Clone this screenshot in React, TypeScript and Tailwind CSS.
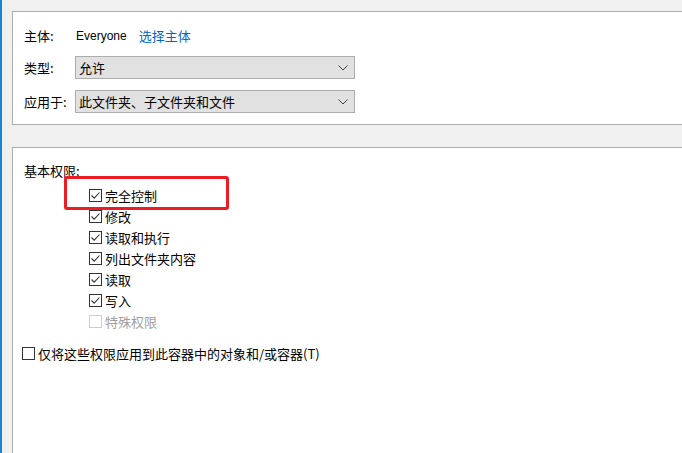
import React from 'react';

const cjk = { fontFamily: '"Noto Sans CJK SC", "Noto Sans", sans-serif' };

const perms = [
  { label: '完全控制', checked: true },
  { label: '修改', checked: true },
  { label: '读取和执行', checked: true },
  { label: '列出文件夹内容', checked: true },
  { label: '读取', checked: true },
  { label: '写入', checked: true },
  { label: '特殊权限', checked: false, disabled: true },
];

function Checkbox({ checked, disabled }: { checked?: boolean; disabled?: boolean }) {
  return (
    <span
      className={
        'flex h-[13px] w-[13px] shrink-0 items-center justify-center border bg-white ' +
        (disabled ? 'border-[#cccccc]' : 'border-[#333333]')
      }
    >
      {checked && (
        <svg width="11" height="11" viewBox="0 0 11 11">
          <path d="M1.5 5.5 L4.2 8.2 L9.5 2.5" fill="none" stroke="#333333" strokeWidth="1.1" />
        </svg>
      )}
    </span>
  );
}

function Select({ value }: { value: string }) {
  return (
    <div className="flex h-[23px] w-[280px] items-center justify-between border border-[#adadad] bg-[#e1e1e1] pl-[3px] pr-[6px]">
      <span className="text-[13px] text-black">{value}</span>
      <svg width="10" height="6" viewBox="0 0 10 6">
        <path d="M0.5 0.5 L5 5 L9.5 0.5" fill="none" stroke="#444444" strokeWidth="1" />
      </svg>
    </div>
  );
}

export default function App() {
  return (
    <div
      className="flex h-[453px] w-[682px] flex-col overflow-hidden border-l-2 border-[#1883d7] bg-[#f0f0f0] pl-[10px] pt-[11px]"
      style={cjk}
    >
      {/* owner / type / applies to */}
      <section className="flex h-[114px] shrink-0 flex-col border-y border-l border-[#adadad] bg-white pl-[11px] pt-[12px] text-[13px] text-black">
        <div className="flex h-[23px] items-center">
          <span className="w-[52px]">主体:</span>
          <span className="text-[12px]" style={{ fontFamily: '"Liberation Sans", Arial, sans-serif' }}>
            Everyone
          </span>
          <span className="ml-[12px] text-[#0066cc]">选择主体</span>
        </div>
        <div className="mt-[9px] flex items-center">
          <span className="w-[51px]">类型:</span>
          <Select value="允许" />
        </div>
        <div className="mt-[11px] flex items-center">
          <span className="w-[51px]">应用于:</span>
          <Select value="此文件夹、子文件夹和文件" />
        </div>
      </section>

      {/* permissions */}
      <section className="relative mt-[22px] flex flex-1 flex-col border-l border-t border-[#adadad] bg-white pt-[12px] text-[13px] text-black">
        <div className="flex h-[21px] items-center pl-[11px]">基本权限:</div>
        <div className="mt-[4px] flex flex-col pl-[76px]">
          {perms.map((p) => (
            <label key={p.label} className="flex h-[21px] items-center gap-[3px]">
              <Checkbox checked={p.checked} disabled={p.disabled} />
              <span className={p.disabled ? 'text-[#a0a0a0]' : ''}>{p.label}</span>
            </label>
          ))}
        </div>
        <label className="mt-[11px] flex h-[21px] items-center gap-[3px] pl-[9px]">
          <Checkbox />
          <span>仅将这些权限应用到此容器中的对象和/或容器(T)</span>
        </label>

        <div className="pointer-events-none absolute left-[51px] top-[28px] h-[34px] w-[165px] rounded-[3px] border-[3px] border-[#ec1c24]" />
      </section>
    </div>
  );
}
